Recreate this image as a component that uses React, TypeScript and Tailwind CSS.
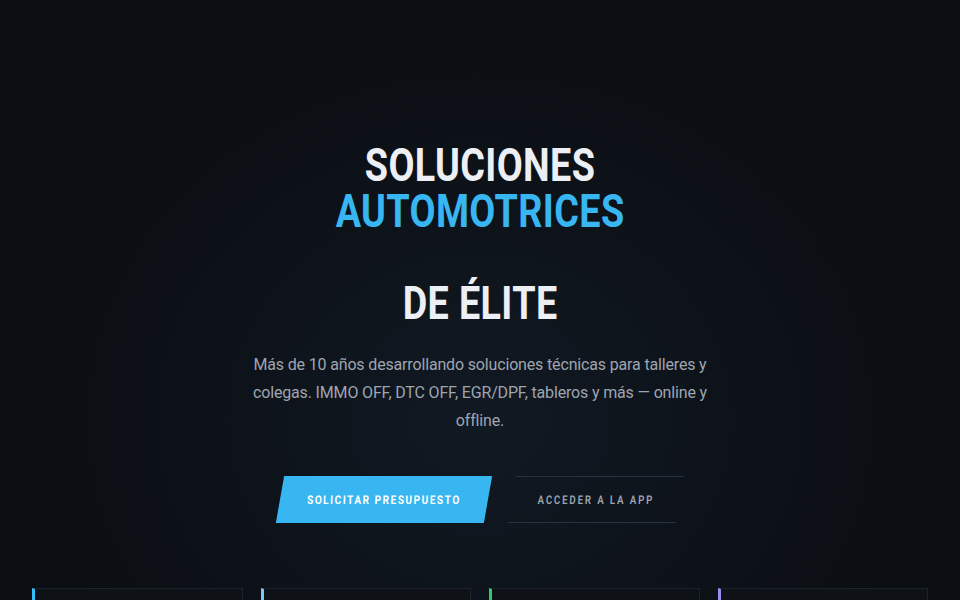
import React from 'react';

const cards = [
    { id: 1, accent: 'border-l-[#38bdf8]' },
    { id: 2, accent: 'border-l-[#7cc8f5]' },
    { id: 3, accent: 'border-l-[#34c96a]' },
    { id: 4, accent: 'border-l-[#9b8cf0]' },
];

export default function App() {
    return (
        <div className="relative h-[600px] overflow-hidden bg-[#0b0e13] font-['Roboto',sans-serif]">
            {/* soft glow behind the hero */}
            <div className="pointer-events-none absolute inset-0 bg-[radial-gradient(ellipse_at_50%_70%,rgba(30,50,70,0.3),transparent_65%)]" />

            <div className="relative flex flex-col items-center pt-[142px]">
                <h1 className="scale-x-[0.82] text-center text-[46px] leading-[46px] font-bold tracking-[0.01em] text-[#eceff3]">
                    <span className="block">SOLUCIONES</span>
                    <span className="block text-[#38b6f1]">AUTOMOTRICES</span>
                    <span className="block mt-[46px]">DE ÉLITE</span>
                </h1>

                <p className="mt-[25px] max-w-[480px] text-center text-[16px] leading-[28px] text-[#9ea5b0] tracking-[-0.01em]">
                    Más de 10 años desarrollando soluciones técnicas para talleres y colegas. IMMO OFF, DTC OFF, EGR/DPF, tableros y más — online y offline.
                </p>

                <div className="mt-[41px] flex items-center gap-6">
                    <button className="h-[47px] w-[208px] -skew-x-[10deg] bg-[#38b6f1]">
                        <span className="block skew-x-[10deg] scale-x-[0.84] text-[12px] font-bold tracking-[0.15em] text-white">
                            SOLICITAR PRESUPUESTO
                        </span>
                    </button>
                    <button className="h-[47px] w-[168px] -skew-x-[10deg] border-y border-[#283142]">
                        <span className="block skew-x-[10deg] scale-x-[0.8] text-[12px] font-semibold tracking-[0.2em] text-[#9ea5b0]">
                            ACCEDER A LA APP
                        </span>
                    </button>
                </div>

                <div className="mt-[65px] grid w-[896px] grid-cols-4 gap-[18px]">
                    {cards.map((card) => (
                        <div
                            key={card.id}
                            className={`h-[120px] border border-[#1d232c] border-l-[3px] bg-[#0e1217] ${card.accent}`}
                        />
                    ))}
                </div>
            </div>
        </div>
    );
}
